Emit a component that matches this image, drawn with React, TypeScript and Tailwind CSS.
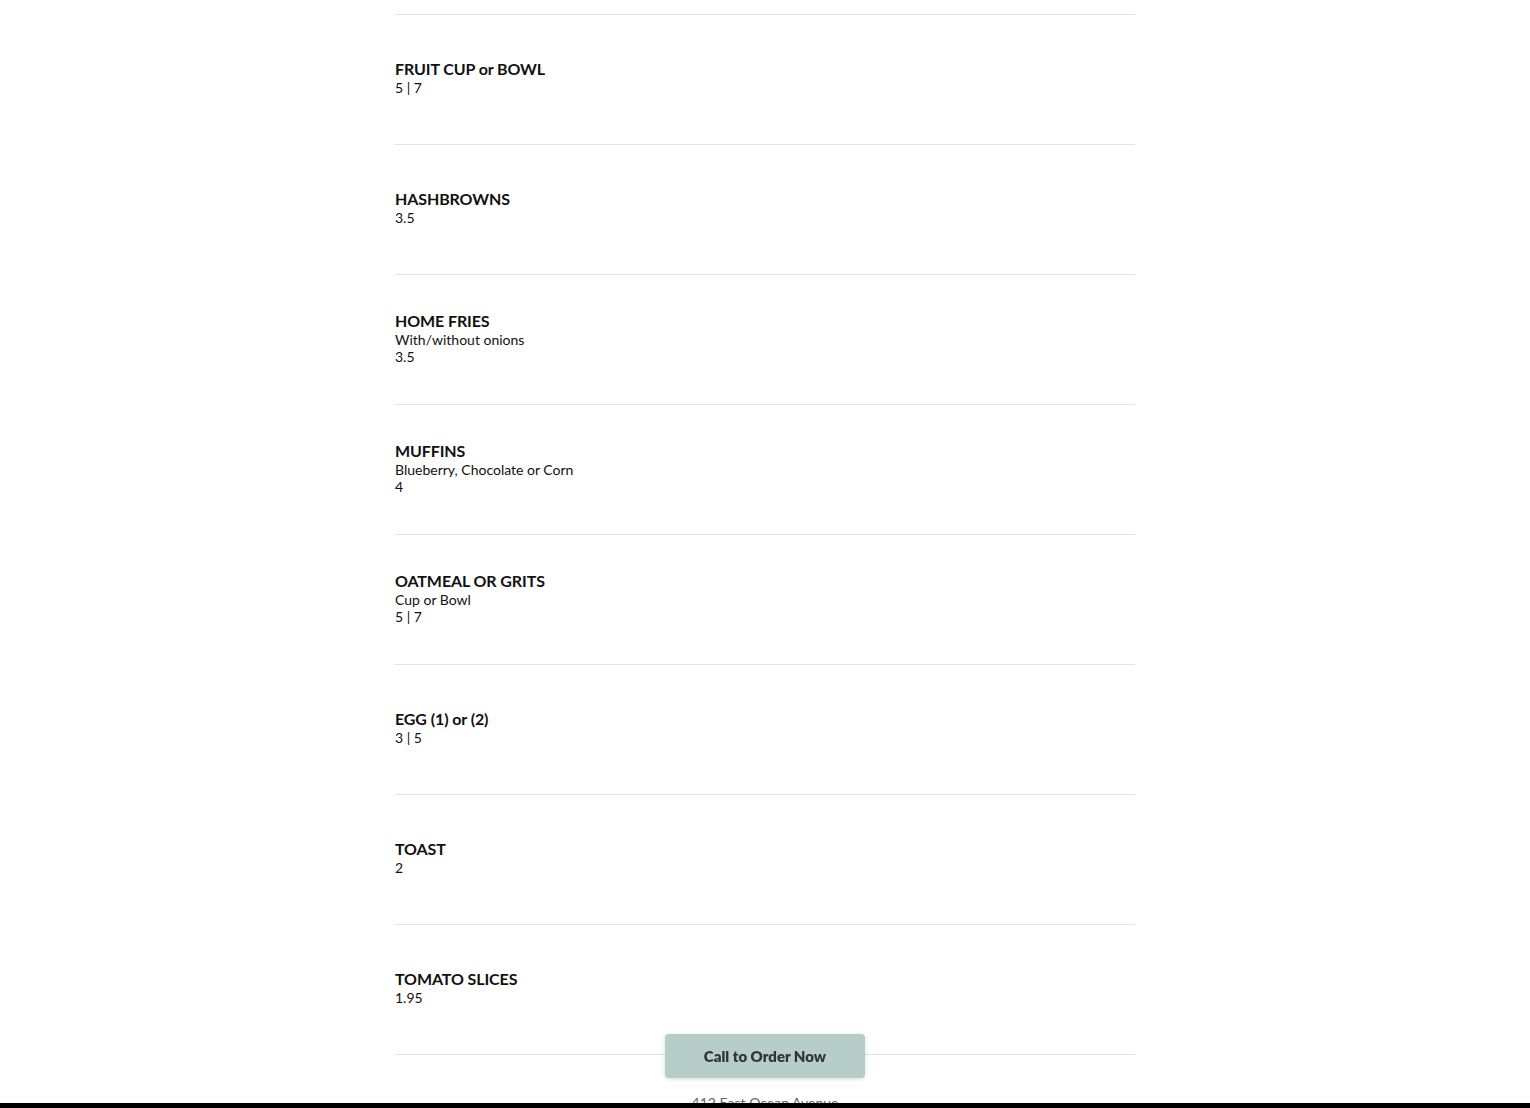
const items = [
  { name: "FRUIT CUP or BOWL", price: "5 | 7" },
  { name: "HASHBROWNS", price: "3.5" },
  { name: "HOME FRIES", desc: "With/without onions", price: "3.5" },
  { name: "MUFFINS", desc: "Blueberry, Chocolate or Corn", price: "4" },
  { name: "OATMEAL OR GRITS", desc: "Cup or Bowl", price: "5 | 7" },
  { name: "EGG (1) or (2)", price: "3 | 5" },
  { name: "TOAST", price: "2" },
  { name: "TOMATO SLICES", price: "1.95" },
];

export default function App() {
  return (
    <div className="h-[1108px] overflow-hidden bg-white font-['Lato','Liberation_Sans',sans-serif] text-[#111]">
      <div className="h-[14px]" />
      <div className="mx-auto w-[740px]">
        {items.map((it) => (
          <div
            key={it.name}
            className="flex h-[130px] flex-col justify-center border-t border-[#e2e2e2] pb-[4px]"
          >
            <h3 className="text-[16px] font-bold leading-[20px] tracking-[-0.1px]">{it.name}</h3>
            {it.desc && <p className="text-[14px] leading-[17px]">{it.desc}</p>}
            <p className="text-[14px] leading-[17px]">{it.price}</p>
          </div>
        ))}
        <div className="border-t border-[#e2e2e2] pt-[37px] text-center text-[14px] text-[#666]">
          412 East Ocean Avenue
        </div>
      </div>

      {/* sticky order button */}
      <button className="fixed bottom-[30px] left-1/2 h-[44px] w-[200px] -translate-x-1/2 rounded-[4px] bg-[#b6cec7] text-[15px] font-extrabold text-[#2b3838] shadow-[0_1px_4px_rgba(0,0,0,0.15)]">
        Call to Order Now
      </button>
      <div className="fixed bottom-0 left-0 h-[5px] w-full bg-black" />
    </div>
  );
}
